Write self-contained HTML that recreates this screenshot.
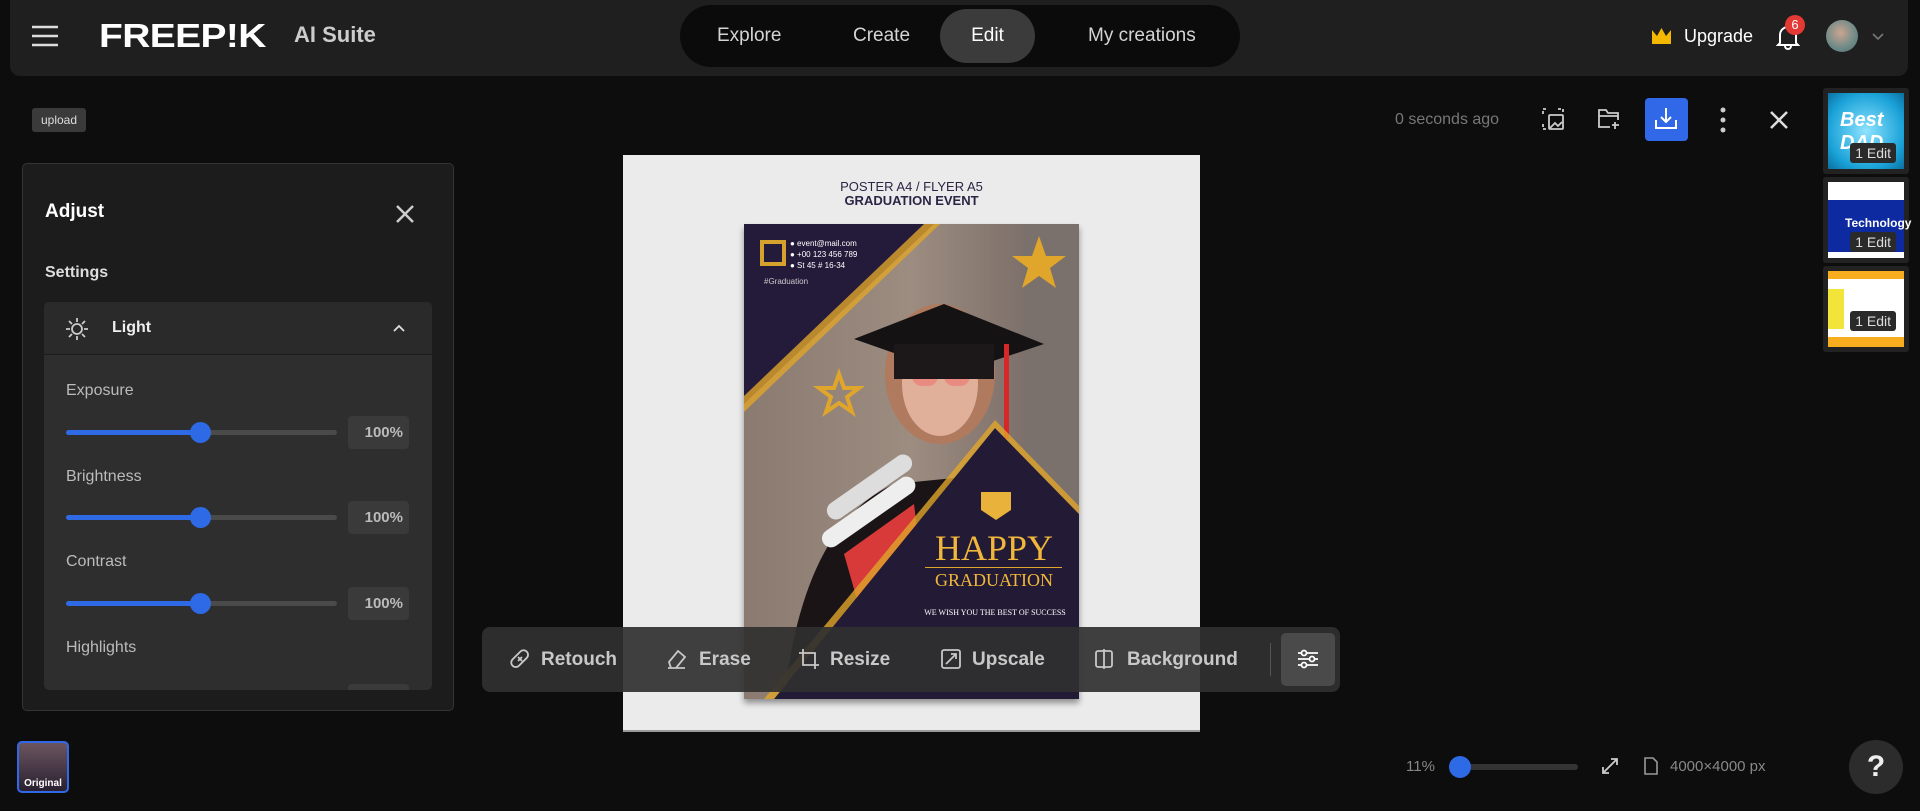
<!DOCTYPE html>
<html><head><meta charset="utf-8"><style>
*{box-sizing:border-box;margin:0;padding:0}
body{width:1920px;height:811px;background:#0d0d0d;font-family:"Liberation Sans",sans-serif;color:#ddd;position:relative;overflow:hidden}
.a{position:absolute}
.hdr{left:10px;top:0;width:1898px;height:76px;background:#1f1f1f;border-radius:0 0 10px 10px}
.nav{left:680px;top:5px;width:560px;height:62px;background:#0b0b0b;border-radius:31px}
.nav span{position:absolute;top:0;line-height:62px;font-size:19px;color:#d4d4d4}
.panel{left:22px;top:163px;width:432px;height:548px;background:#1c1c1c;border:1px solid #343434;border-radius:5px}
.lbl{font-size:16px;color:#bbb}
.track{height:5px;background:#4a4a4a;border-radius:3px;width:271px}
.fill{height:5px;background:#2f6ae6;border-radius:3px;width:135px}
.thumb{width:21px;height:21px;border-radius:50%;background:#2f6ae6}
.val{width:61px;height:33px;background:#3a3a3a;border-radius:4px;font-size:15px;font-weight:bold;color:#bbb;text-align:right;padding-right:6px;line-height:33px}
.tb span{position:absolute;top:0;line-height:65px;font-size:19px;font-weight:bold;color:#c8c8c8}
.th{left:1823px;width:86px;background:#222;border-radius:3px}
.ed{position:absolute;right:8px;bottom:6px;background:#2a2a2a;color:#ddd;font-size:14px;padding:2px 5px;border-radius:3px}
</style></head><body>
<div class="a hdr"></div>
<svg class="a" style="left:32px;top:25px" width="27" height="22"><g stroke="#ddd" stroke-width="2.5"><line x1="0" y1="2" x2="26" y2="2"/><line x1="0" y1="11" x2="26" y2="11"/><line x1="0" y1="20" x2="26" y2="20"/></g></svg>
<div class="a" style="left:99px;top:17px;font-size:33px;font-weight:900;color:#fff;letter-spacing:-0.5px;transform:scaleX(1.18);transform-origin:left">FREEP!K</div>
<div class="a" style="left:294px;top:22px;font-size:22px;font-weight:bold;color:#ccc">AI Suite</div>
<div class="a nav"><span style="left:37px">Explore</span><span style="left:173px">Create</span>
<div class="a" style="left:260px;top:4px;width:95px;height:54px;background:#3b3b3b;border-radius:27px"></div><span style="left:260px;width:95px;text-align:center;color:#fff">Edit</span><span style="left:408px">My creations</span></div>
<svg class="a" style="left:1652px;top:28px" width="19" height="16"><path d="M0 2L5 8L9.5 0L14 8L19 2V16H0Z" fill="#f5b800"/></svg>
<div class="a" style="left:1684px;top:26px;font-size:18px;color:#fff">Upgrade</div>
<svg class="a" style="left:1776px;top:24px" width="24" height="26"><path d="M4 19V11a8 8 0 0 1 16 0v8l2 2H2Z M9 22a3 3 0 0 0 6 0" fill="none" stroke="#fff" stroke-width="2"/></svg>
<div class="a" style="left:1785px;top:15px;width:20px;height:20px;border-radius:50%;background:#e53935;color:#fff;font-size:13px;text-align:center;line-height:20px">6</div>
<div class="a" style="left:1826px;top:20px;width:32px;height:32px;border-radius:50%;background:radial-gradient(circle at 45% 40%,#caa590,#6d8a88 60%,#4e6a6a)"></div>
<svg class="a" style="left:1872px;top:33px" width="12" height="8"><path d="M1 1l5 5 5-5" fill="none" stroke="#777" stroke-width="1.6"/></svg>

<div class="a" style="left:32px;top:108px;width:54px;height:24px;background:#3a3a3a;border-radius:3px;font-size:12px;color:#ddd;text-align:center;line-height:24px">upload</div>

<div class="a panel">
<div class="a" style="left:22px;top:37px;font-size:19px;font-weight:bold;color:#fff">Adjust</div>
<svg class="a" style="left:372px;top:40px" width="20" height="20"><path d="M2 2L18 18M18 2L2 18" stroke="#ccc" stroke-width="2.5"/></svg>
<div class="a" style="left:22px;top:100px;font-size:16px;font-weight:bold;color:#ddd">Settings</div>
<div class="a" style="left:21px;top:138px;width:388px;height:388px;background:#2e2e2e;border-radius:5px;overflow:hidden">
<div class="a" style="left:0;top:0;width:388px;height:53px;background:#2a2a2a;border-bottom:1px solid #1c1c1c"></div>
<svg class="a" style="left:22px;top:16px" width="22" height="22"><circle cx="11" cy="11" r="5" fill="none" stroke="#ccc" stroke-width="1.8"/><g stroke="#ccc" stroke-width="1.8"><path d="M11 0v4M11 18v4M0 11h4M18 11h4M3 3l3 3M16 16l3 3M3 19l3-3M16 6l3-3"/></g></svg>
<div class="a" style="left:68px;top:17px;font-size:16px;font-weight:bold;color:#eee">Light</div>
<svg class="a" style="left:349px;top:22px" width="12" height="8"><path d="M1 7l5-5 5 5" fill="none" stroke="#ddd" stroke-width="1.8"/></svg>
<div class="a lbl" style="left:22px;top:80px">Exposure</div>
<div class="a track" style="left:22px;top:128px"><div class="fill"></div></div><div class="a thumb" style="left:146px;top:120px"></div><div class="a val" style="left:304px;top:114px">100%</div>
<div class="a lbl" style="left:22px;top:166px">Brightness</div>
<div class="a track" style="left:22px;top:213px"><div class="fill"></div></div><div class="a thumb" style="left:146px;top:205px"></div><div class="a val" style="left:304px;top:199px">100%</div>
<div class="a lbl" style="left:22px;top:251px">Contrast</div>
<div class="a track" style="left:22px;top:299px"><div class="fill"></div></div><div class="a thumb" style="left:146px;top:291px"></div><div class="a val" style="left:304px;top:285px">100%</div>
<div class="a lbl" style="left:22px;top:337px">Highlights</div>
<div class="a val" style="left:304px;top:382px"></div>
</div></div>

<div class="a" style="left:623px;top:155px;width:577px;height:577px;background:#ebebeb;border-bottom:2px solid #999"></div>
<div class="a" style="left:623px;top:180px;width:577px;text-align:center;font-size:13px;color:#2c2444;line-height:14px">POSTER A4 / FLYER A5<br><b>GRADUATION EVENT</b></div>
<svg class="a" style="left:744px;top:224px;box-shadow:0 4px 6px rgba(0,0,0,.4)" width="335" height="475" viewBox="0 0 335 475">
<defs><linearGradient id="bg" x1="0" y1="0" x2="1" y2="0"><stop offset="0" stop-color="#8a7a70"/><stop offset=".5" stop-color="#9d8c80"/><stop offset="1" stop-color="#6e6360"/></linearGradient></defs>
<rect width="335" height="475" fill="url(#bg)"/>
<rect x="280" y="0" width="55" height="300" fill="#7a706c"/>
<path d="M40 475Q60 300 150 260L250 250L260 475Z" fill="#1b1416"/>
<path d="M100 330L170 280L180 360L120 400Z" fill="#d83a3a"/>
<ellipse cx="196" cy="150" rx="55" ry="70" fill="#b07a5e"/>
<ellipse cx="196" cy="160" rx="38" ry="52" fill="#e0b09a"/>
<rect x="168" y="140" width="26" height="22" rx="10" fill="#e98b80"/><rect x="200" y="140" width="26" height="22" rx="10" fill="#e98b80"/>
<path d="M110 115L200 80L300 120L210 150Z" fill="#151214"/>
<rect x="150" y="120" width="100" height="35" fill="#1c1819"/>
<rect x="260" y="120" width="5" height="95" fill="#d62828"/>
<g transform="rotate(-35 120 290)"><rect x="70" y="282" width="110" height="18" rx="9" fill="#eee"/><rect x="90" y="262" width="100" height="18" rx="9" fill="#ddd"/></g>
<path d="M0 0H190L0 180Z" fill="#241a3a"/>
<path d="M0 172L180 0H196L0 188Z" fill="#e0a52b" opacity=".8"/>
<path d="M251 204L335 290V475H30Z" fill="#231a36"/>
<path d="M251 196L335 282V290L251 204L30 475H20Z" fill="#e0a52b" opacity=".8"/>
<rect x="16" y="16" width="26" height="26" fill="#d4a22d"/><rect x="20" y="20" width="18" height="18" fill="#241a3a"/>
<text x="46" y="22" font-size="8" fill="#fff" font-family="Liberation Sans">● event@mail.com</text>
<text x="46" y="33" font-size="8" fill="#fff" font-family="Liberation Sans">● +00 123 456 789</text>
<text x="46" y="44" font-size="8" fill="#fff" font-family="Liberation Sans">● St 45 # 16-34</text>
<text x="20" y="60" font-size="8" fill="#ccc" font-family="Liberation Sans">#Graduation</text>
<path d="M295 12l7 20h20l-16 12 6 20-17-12-17 12 6-20-16-12h20z" fill="#e0a52b"/>
<path d="M95 150l5 14h15l-12 9 5 15-13-9-13 9 5-15-12-9h15z" fill="none" stroke="#e0a52b" stroke-width="4"/>
<path d="M237 268h30v18l-15 10-15-10z" fill="#e9b23a"/>
<text x="250" y="336" font-size="36" fill="#f0b73a" font-family="Liberation Serif" text-anchor="middle">HAPPY</text>
<rect x="181" y="343" width="137" height="1" fill="#e0a52b"/>
<text x="250" y="362" font-size="18" fill="#f0b73a" font-family="Liberation Serif" text-anchor="middle">GRADUATION</text>
<text x="251" y="391" font-size="8" fill="#fff" font-family="Liberation Serif" text-anchor="middle">WE WISH YOU THE BEST OF SUCCESS</text>
</svg>

<div class="a tb" style="left:482px;top:627px;width:858px;height:65px;background:rgba(48,48,48,.92);border-radius:8px">
<svg class="a" style="left:27px;top:21px" width="22" height="22"><g fill="none" stroke="#c8c8c8" stroke-width="1.8"><rect x="6" y="1" width="9" height="20" rx="4.5" transform="rotate(45 11 11)"/><path d="M9 9l4 4M13 9l-4 4"/></g></svg><span style="left:59px">Retouch</span>
<svg class="a" style="left:183px;top:21px" width="22" height="22"><g fill="none" stroke="#c8c8c8" stroke-width="1.8"><path d="M4 14l9-11 7 6-9 11H6z M3 20h17"/></g></svg><span style="left:217px">Erase</span>
<svg class="a" style="left:316px;top:21px" width="22" height="22"><g fill="none" stroke="#c8c8c8" stroke-width="1.8"><path d="M5 1v16h16M1 5h16v16"/></g></svg><span style="left:348px">Resize</span>
<svg class="a" style="left:458px;top:21px" width="22" height="22"><g fill="none" stroke="#c8c8c8" stroke-width="1.8"><rect x="2" y="2" width="18" height="18" rx="2"/><path d="M6 16l10-10M11 6h5v5"/></g></svg><span style="left:490px">Upscale</span>
<svg class="a" style="left:611px;top:21px" width="22" height="22"><g fill="none" stroke="#c8c8c8" stroke-width="1.8"><rect x="3" y="3" width="16" height="16" rx="2"/><path d="M11 1v20"/></g></svg><span style="left:645px">Background</span>
<div class="a" style="left:788px;top:16px;width:1px;height:33px;background:#555"></div>
<div class="a" style="left:799px;top:6px;width:54px;height:53px;background:#4a4a4a;border-radius:5px"></div>
<svg class="a" style="left:815px;top:22px" width="22" height="20"><g stroke="#fff" stroke-width="1.8" fill="none"><path d="M1 4h20M1 10h20M1 16h20"/><circle cx="7" cy="4" r="2.5" fill="#4a4a4a"/><circle cx="15" cy="10" r="2.5" fill="#4a4a4a"/><circle cx="7" cy="16" r="2.5" fill="#4a4a4a"/></g></svg>
</div>

<div class="a" style="left:1395px;top:111px;font-size:16px;color:#777">0 seconds ago</div>
<svg class="a" style="left:1542px;top:108px" width="22" height="22"><g fill="none" stroke="#ccc" stroke-width="1.8"><path d="M1 6V1h5M16 1h5v5M1 16v5h5" stroke-dasharray="3 2"/><rect x="7" y="7" width="14" height="14" rx="1"/><path d="M8 20l5-5 3 3 4-4"/></g></svg>
<svg class="a" style="left:1598px;top:108px" width="22" height="22"><g fill="none" stroke="#ccc" stroke-width="1.8"><path d="M12 19H1V2h7l2 3h10v7M1 8h19M17 14v7M14 17h7"/></g></svg>
<div class="a" style="left:1645px;top:98px;width:43px;height:43px;background:#3168e8;border-radius:4px"></div>
<svg class="a" style="left:1655px;top:107px" width="22" height="24"><g fill="none" stroke="#fff" stroke-width="2"><path d="M11 1v14M6 10l5 5 5-5M1 13v8h20v-8"/></g></svg>
<svg class="a" style="left:1720px;top:107px" width="6" height="26"><circle cx="3" cy="3" r="2.5" fill="#ccc"/><circle cx="3" cy="13" r="2.5" fill="#ccc"/><circle cx="3" cy="23" r="2.5" fill="#ccc"/></svg>
<svg class="a" style="left:1769px;top:110px" width="20" height="20"><path d="M2 2L18 18M18 2L2 18" stroke="#ddd" stroke-width="2.5"/></svg>

<div class="a th" style="top:88px;height:86px"><div class="a" style="left:5px;top:5px;width:76px;height:76px;background:radial-gradient(circle,#8fe3ff,#1aa2d8 70%,#0b6fa0)"><div class="a" style="left:12px;top:16px;font-size:20px;font-weight:900;color:#fff;font-style:italic">Best<br>DAD</div><div class="ed">1 Edit</div></div></div>
<div class="a th" style="top:177px;height:86px"><div class="a" style="left:5px;top:5px;width:76px;height:76px;background:#fff"><div class="a" style="left:0;top:18px;width:76px;height:52px;background:#0d2aa0"></div><div class="a" style="left:17px;top:34px;font-size:12px;color:#fff;font-weight:bold">Technology</div><div class="ed">1 Edit</div></div></div>
<div class="a th" style="top:266px;height:86px"><div class="a" style="left:5px;top:5px;width:76px;height:76px;background:#fff;border-top:8px solid #f7ad1e;border-bottom:10px solid #f7ad1e"><div class="a" style="left:0;top:10px;width:16px;height:40px;background:#f3e43a"></div><div class="ed">1 Edit</div></div></div>

<div class="a" style="left:17px;top:741px;width:52px;height:52px;border:2px solid #3168e8;border-radius:5px;background:linear-gradient(#6b5560,#2a2030);overflow:hidden"><div class="a" style="left:0;bottom:2px;width:48px;text-align:center;font-size:10px;font-weight:bold;color:#fff">Original</div></div>

<div class="a" style="left:1406px;top:758px;font-size:15px;color:#888">11%</div>
<div class="a" style="left:1451px;top:764px;width:127px;height:6px;background:#333;border-radius:3px"></div>
<div class="a" style="left:1449px;top:756px;width:22px;height:22px;border-radius:50%;background:#2f6ae6"></div>
<svg class="a" style="left:1601px;top:757px" width="18" height="18"><g fill="none" stroke="#ccc" stroke-width="1.8"><path d="M2 16L16 2M10 2h6v6M2 10v6h6"/></g></svg>
<svg class="a" style="left:1644px;top:757px" width="14" height="18"><path d="M1 1h8l4 4v12H1z" fill="none" stroke="#999" stroke-width="1.6"/></svg>
<div class="a" style="left:1670px;top:758px;font-size:15px;color:#888">4000×4000 px</div>
<div class="a" style="left:1849px;top:740px;width:54px;height:54px;border-radius:50%;background:#2c2c2c;color:#eee;font-size:30px;font-weight:bold;text-align:center;line-height:54px">?</div>
</body></html>
